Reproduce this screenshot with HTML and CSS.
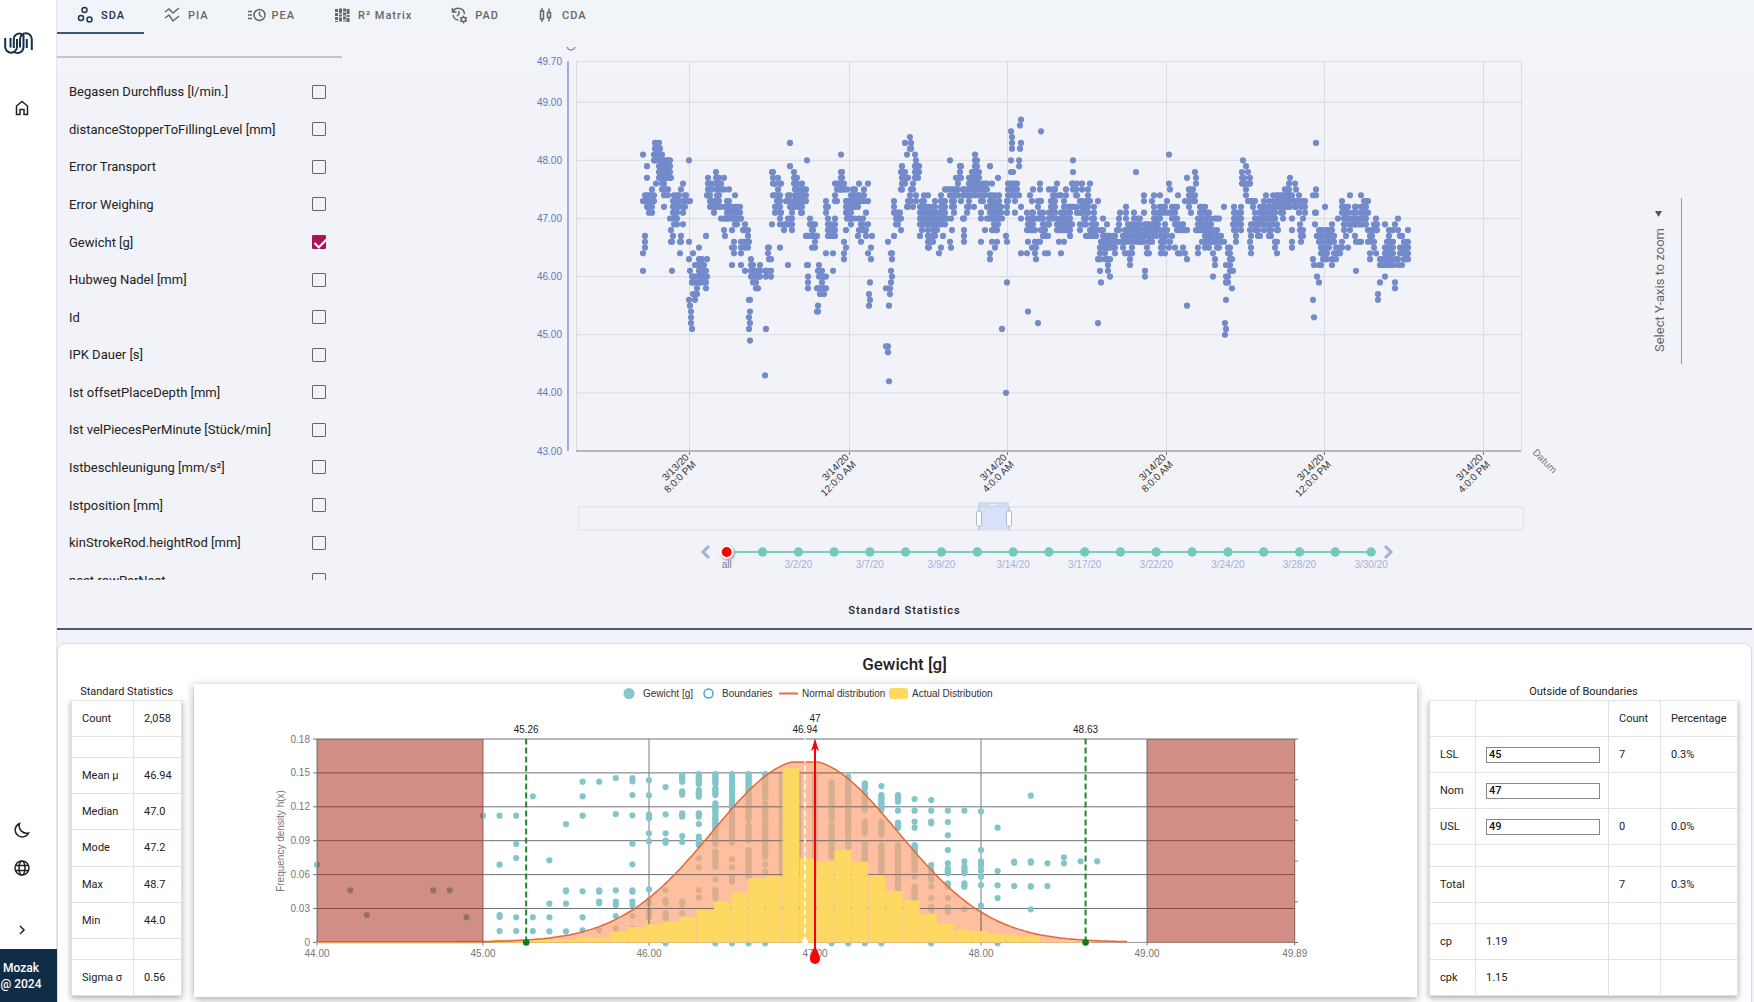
FILE: index.html
```html
<!DOCTYPE html>
<html lang="en">
<head>
<meta charset="utf-8">
<title>Standard Statistics</title>
<link rel="stylesheet" href="styles.css">
</head>
<body>
<div class="app">
  <nav class="sidebar">
    <a class="logo" href="#" aria-label="Start"><svg width="29" height="22" viewBox="0 0 29 22"><path d="M1.200 6v8.800a5.900 5.900 0 0 0 11.800 0V7M6.500 6v9.500M9.800 16V7.200a5.500 5.900 0 0 1 9.700-3.500V15a5.900 5.900 0 0 1-9.700 4.500M16 15.500V7.200a5.900 5.900 0 0 1 11.800 0V18M22.800 16V7"/></svg></a>
    <a class="nav-icon" href="#" aria-label="Home"><svg width="16" height="16" viewBox="0 0 16 16"><path d="M2.500 14.500V6L8 1.500 13.500 6v8.500H10V9.500H6v5z"/></svg></a>
    <div class="side-bottom">
      <button class="nav-icon" aria-label="Dark mode"><svg width="16" height="16" viewBox="0 0 16 16"><path d="M5.500 1.500a7 7 0 1 0 9 9.500A7.500 7.500 0 0 1 5.500 1.500z"/></svg></button>
      <button class="nav-icon" aria-label="Language"><svg width="16" height="16" viewBox="0 0 16 16"><circle cx="8" cy="8" r="7"/><ellipse cx="8" cy="8" rx="3" ry="7"/><path d="M2 5.500h12M2 10.500h12"/></svg></button>
      <button class="nav-icon expand" aria-label="Expand"><svg width="16" height="16" viewBox="0 0 16 16"><path d="M6 4l4 4-4 4"/></svg></button>
    </div>
    <div class="brand">Mozak<br>@ 2024</div>
  </nav>
  <main class="main">
    <div class="tabs" role="tablist">
      <button class="tab active" role="tab"><svg width="18" height="18" viewBox="0 0 18 18"><circle cx="7.500" cy="4" r="2.500"/><circle cx="4" cy="12" r="2.500"/><circle cx="12.500" cy="13.500" r="2.500"/></svg>SDA</button>
      <button class="tab" role="tab"><svg width="18" height="18" viewBox="0 0 18 18"><path d="M1 6l4-3 4 4 6-5M1 12l4-3 4 6 6-5"/></svg>PIA</button>
      <button class="tab" role="tab"><svg width="18" height="18" viewBox="0 0 18 18"><circle cx="11.500" cy="9" r="5.500"/><path d="M11.500 5.500V9l2.500 2M0 5.500h4M0 9h4M0 12.500h4"/></svg>PEA</button>
      <button class="tab" role="tab"><svg width="18" height="18" viewBox="0 0 18 18"><path class="thick" stroke-dasharray="3 1" d="M2.500 3v13M10.500 2.500v13"/><path class="thick" stroke-dasharray="5 1 2 1" d="M6.500 2.500v13M14 3v13"/></svg>R² Matrix</button>
      <button class="tab" role="tab"><svg width="18" height="18" viewBox="0 0 18 18"><path d="M1.500 2v4h4M2 6a6 6 0 0 1 11.500 2M2 9a6 6 0 0 0 5.500 5M8 5v3l-2 2"/><circle cx="12.500" cy="13.500" r="2.200"/><path d="M12.500 9.500v1.500M12.500 16v1.500M9 11.500l1.500 1M14.500 14.500l1.500 1M16 11.500l-1.500 1M10.500 14.500L9 15.500"/></svg>PAD</button>
      <button class="tab" role="tab"><svg width="18" height="18" viewBox="0 0 18 18"><path d="M2.500 5h3v8h-3zM4 2v3M4 13v3M9.500 6.500h3v5h-3zM11 2.500v4M11 11.500v4"/></svg>CDA</button>
    </div>

    <section class="workspace">
      <div class="params">
        <ul class="param-list">
          <li><label for="p1">Begasen Durchfluss [l/min.]</label><input type="checkbox" id="p1"></li>
          <li><label for="p2">distanceStopperToFillingLevel [mm]</label><input type="checkbox" id="p2"></li>
          <li><label for="p3">Error Transport</label><input type="checkbox" id="p3"></li>
          <li><label for="p4">Error Weighing</label><input type="checkbox" id="p4"></li>
          <li><label for="p5">Gewicht [g]</label><input type="checkbox" id="p5" checked></li>
          <li><label for="p6">Hubweg Nadel [mm]</label><input type="checkbox" id="p6"></li>
          <li><label for="p7">Id</label><input type="checkbox" id="p7"></li>
          <li><label for="p8">IPK Dauer [s]</label><input type="checkbox" id="p8"></li>
          <li><label for="p9">Ist offsetPlaceDepth [mm]</label><input type="checkbox" id="p9"></li>
          <li><label for="p10">Ist velPiecesPerMinute [Stück/min]</label><input type="checkbox" id="p10"></li>
          <li><label for="p11">Istbeschleunigung [mm/s²]</label><input type="checkbox" id="p11"></li>
          <li><label for="p12">Istposition [mm]</label><input type="checkbox" id="p12"></li>
          <li><label for="p13">kinStrokeRod.heightRod [mm]</label><input type="checkbox" id="p13"></li>
          <li><label for="p14">nest.rowPerNest</label><input type="checkbox" id="p14"></li>
        </ul>
      </div>
      <div class="scatter"><svg id="scatter" viewBox="342 47 1258 533"></svg></div>
      <div class="axis-zoom">
        <div class="axis-select">
          <select aria-label="Select Y-axis to zoom"><option>Select Y-axis to zoom</option></select>
          <svg class="caret" width="7" height="6" viewBox="0 0 7 6"><path d="M0 0h7L3.500 6z"/></svg>
        </div>
      </div>
    </section>

    <h2 class="section-title">Standard Statistics</h2>

    <section class="card">
      <h3 class="card-title">Gewicht [g]</h3>
      <div class="card-grid">
        <table class="stats">
          <caption>Standard Statistics</caption>
          <tbody>
            <tr><td>Count</td><td>2,058</td></tr>
            <tr class="gap"><td></td><td></td></tr>
            <tr><td>Mean μ</td><td>46.94</td></tr>
            <tr><td>Median</td><td>47.0</td></tr>
            <tr><td>Mode</td><td>47.2</td></tr>
            <tr><td>Max</td><td>48.7</td></tr>
            <tr><td>Min</td><td>44.0</td></tr>
            <tr class="gap"><td></td><td></td></tr>
            <tr><td>Sigma σ</td><td>0.56</td></tr>
          </tbody>
        </table>
        <div class="histogram"><svg id="histogram" viewBox="194 684 1223 313"></svg></div>
        <table class="stats bounds">
          <caption>Outside of Boundaries</caption>
          <colgroup><col class="c1"><col class="c2"><col class="c3"><col></colgroup>
          <tbody>
            <tr><td></td><td></td><td>Count</td><td>Percentage</td></tr>
            <tr><td><label for="lsl">LSL</label></td><td><input id="lsl" value="45"></td><td>7</td><td>0.3%</td></tr>
            <tr><td><label for="nom">Nom</label></td><td><input id="nom" value="47"></td><td></td><td></td></tr>
            <tr><td><label for="usl">USL</label></td><td><input id="usl" value="49"></td><td>0</td><td>0.0%</td></tr>
            <tr class="gap"><td></td><td></td><td></td><td></td></tr>
            <tr><td>Total</td><td></td><td>7</td><td>0.3%</td></tr>
            <tr class="gap"><td></td><td></td><td></td><td></td></tr>
            <tr><td>cp</td><td>1.19</td><td></td><td></td></tr>
            <tr><td>cpk</td><td>1.15</td><td></td><td></td></tr>
          </tbody>
        </table>
      </div>
    </section>
  </main>
</div>
<script src="charts.js"></script>
</body>
</html>
```
FILE: styles.css
```css
* { box-sizing: border-box; }
body { margin: 0; font-family: Roboto, sans-serif; font-size: 13px; color: #222; background: #f2f3f8; }
button { border: 0; background: none; padding: 0; margin: 0; font: inherit; color: inherit; }
svg { display: block; }

.app { display: flex; height: 100vh; overflow: hidden; }

.sidebar { flex: 0 0 57px; display: flex; flex-direction: column; background: #fff; border-right: 1px solid #e3e5ee; }
.logo { margin: 32px 0 0 4px; height: 22px; }
.logo svg { fill: none; stroke: #17304d; stroke-width: 2; }
.nav-icon { width: 16px; height: 16px; margin-left: 14px; }
.nav-icon svg { fill: none; stroke: #222; stroke-width: 1.5; }
.logo + .nav-icon { margin-top: 46px; }
.side-bottom { margin-top: auto; display: flex; flex-direction: column; gap: 22px; padding-bottom: 11px; }
.expand { margin-top: 24px; }
.brand { height: 53px; padding: 11px 15px 0 0; margin-right: -1px; background: #112c45; color: #fff; font-size: 12px; line-height: 16px; font-weight: 500; text-align: center; }

.main { flex: 1; min-width: 0; overflow: hidden; background: linear-gradient(#f0f4f8, #f2f3f8 80px); }
.tabs { display: flex; height: 34px; }
.tab { display: flex; align-items: center; gap: 6px; padding: 0 19px 2px 20px; font-size: 11px; font-weight: 500; letter-spacing: 1px; color: #666; border-bottom: 2px solid transparent; }
.tab svg { fill: none; stroke: currentColor; stroke-width: 1.5; }
.tab .thick { stroke-width: 3; }
.tab.active { color: #1b3553; border-bottom-color: #3f5872; }

.workspace { display: flex; margin-top: 13px; height: 533px; }
.params { flex: 0 0 285px; overflow: hidden; padding-top: 9px; }
.param-list { list-style: none; margin: 0; padding: 15px 16px 0 12px; height: 543px; border-top: 2px solid #c4c5ca; display: grid; grid-template-rows: repeat(14, 1fr); }
.param-list li { display: flex; align-items: center; justify-content: space-between; }
.param-list input { appearance: none; width: 14px; height: 14px; margin: 0; border: 1px solid #666; border-radius: 1px; }
.param-list input:checked { border-color: #ad1457; background: #ad1457; position: relative; }
.param-list input:checked::after { content: ""; position: absolute; left: 4px; top: 0; width: 5px; height: 10px; border: solid #fff; border-width: 0 2px 2px 0; transform: rotate(45deg); }
.scatter { flex: 1; min-width: 0; }
.scatter svg, .histogram svg { width: 100%; height: auto; }
svg text { font-family: "Liberation Sans", Arial, sans-serif; font-size: 10px; }

.axis-zoom { flex: 0 0 154px; display: flex; padding-top: 151px; }
.axis-select { width: 82px; height: 166px; border-right: 1px solid #999; display: flex; align-items: center; justify-content: center; position: relative; }
.axis-select select { flex: none; appearance: none; width: 166px; height: 30px; padding: 0 12px; border: 0; background: none; font: 13px Roboto, sans-serif; color: #666; transform: rotate(-90deg); position: relative; left: 18px; }
.caret { position: absolute; right: 19px; top: 13px; fill: #555; }

.section-title { margin: 0 2px 0 0; padding: 23px 0 9px; font-size: 11px; line-height: 16px; font-weight: 500; letter-spacing: 1px; text-align: center; border-bottom: 2px solid #4d5872; }

.card { margin: 13px 2px 0 0; height: 400px; background: #fff; border: 1px solid #d9dbe0; border-radius: 8px; padding: 0 13px; }
.card-title { margin: 0; font-size: 17px; line-height: 40px; font-weight: 500; text-align: center; }
.card-grid { display: grid; grid-template-columns: 111px minmax(0, 1fr) 309px; gap: 12px; align-items: start; }
.histogram { background: #fff; box-shadow: 0 2px 8px rgba(0, 0, 0, .35); }
.stats { width: 100%; height: 296px; border-collapse: collapse; font-size: 11px; box-shadow: 0 2px 6px rgba(0, 0, 0, .35); background: #fff; }
.stats caption { height: 16px; line-height: 16px; background: #fff; white-space: nowrap; }
.stats td { padding: 0 0 0 10px; height: 36px; border: 1px solid #e2e2e2; white-space: nowrap; }
.stats .gap td { height: 21px; }
.stats td:first-child { width: 62px; }
.bounds { table-layout: fixed; }
.bounds .c1 { width: 46px; }
.bounds .c2 { width: 133px; }
.bounds .c3 { width: 52px; }
.bounds input { display: block; width: 114px; height: 16px; padding: 0 2px; border: 1px solid #888; background: #fff; font: 500 11px Roboto, sans-serif; color: #111; }
```
FILE: charts.js
```js
const NS = 'http://www.w3.org/2000/svg';

function add(parent, name, attrs, text) {
  const el = document.createElementNS(NS, name);
  for (const key in attrs) el.setAttribute(key, attrs[key]);
  if (text !== undefined) el.textContent = text;
  parent.appendChild(el);
  return el;
}
const line = (p, x1, y1, x2, y2, stroke, width = 1, extra = {}) =>
  add(p, 'line', { x1, y1, x2, y2, stroke, 'stroke-width': width, ...extra });

// "x:a,b,c-d" groups separated by spaces; ranges step by the given amount
function parse(data, step) {
  const out = [];
  data.trim().split(/\s+/).forEach(group => {
    const [x, list] = group.split(':');
    list.split(',').forEach(item => {
      const [a, b = a] = item.split('-').map(Number);
      for (let v = a; v <= b; v += step) out.push([+x, v]);
    });
  });
  return out;
}

// Weight over time: values are tenths of a gram above 40 g
const weights = parse(`
643:81,61,73,64 645:65-67,73-74 647:77,79,72-74 649:71-74 652:71-75 654:73-74,80-81 655:80-83 656:76,81-83
659:77-83 660:77-82 662:75-81 664:72,74-80 666:75,77-80 668:74,75,77-80 670:77-80,70 671:68,66,77 672:61,66
673:67,71-73 674:69-74 677:69-74 679:72-74 680:64,66 681:66,67,75 683:76,71-73,69 685:72,74 686:73,74
689:80,66,63,56,73 690:73,61,55 691:52-54 692:51,60,59 693:64,57,59,60 695:56,57,59,60,62 697:57,58,60,62
699:65,63,61,59 700:59-63 702:60-63 704:59-62 706:58-61,67 707:60,63,74 708:77,74-76 710:72-76 712:72,73,75,76
714:71-73 716:78,76,77,72,73 717:73-77 719:72-77 721:70,72,75,76 724:77,75,68,70 725:67,70,72 727:70-73
729:75,70-73 732:62,65,68,70-72 734:64-66,70,71 735:74,69-72 737:69-72 740:70-72 741:62,64-66,70 743:66,68
745:61,69,68,65,66 748:65-68 749:56,53,51,66 750:49,52,54,56 751:60-63 753:59-62 756:58-61 758:58,60,61
760:60-62 765:43,61 766:51,60,61 768:64,65,61 769:65,63 771:63,61,60 772:69,78 773:77,78,74,76 775:71,72,74,76
777:72-74 778:77,75,73 780:76,69-74,65 781:76,71 784:68,69 786:69,73 788:62,69,70,73,74 790:83,79,72-74,69
792:68-72 794:78,72,73,76,77 795:72-77 797:73-77 799:72-75 801:71-75 802:71-76 804:73-75 806:73-75,67
807:80,67,62 808:62,58-60,67 810:70,69 812:65,67,68 813:67-69 815:69,67,65,66 817:58,54,67 818:54,55,61,58
819:60-62 820:57,58,61 822:58-61 824:57,58,60 826:64,60,58,71-73 828:67-70,72 830:67-69 833:61,64,67-69
835:67-70,73,74,76 837:75,76,73 839:75,76 841:81,75-78 842:75-78 844:63,64,66,75,76 846:65,68,71-73 847:70-73,75
849:70-73 851:69-74 853:72-75 855:72-75,70 858:67,72-74 859:76,73,74,70,68 861:66,69,68,73 863:69,70,68,74
864:73-75,68 866:71,67,68 868:76,73,69,64 869:55,57 870:56,59 871:63,65 872:67 886:58,48 888:66,47,48 889:42,55
890:57,58 891:59,61,64 892:64,63,60 894:67,71-73 896:69-71 898:69-71 900:70,71 901:68,75,78,70 902:75-79
905:83,76-78 907:81,72,77 908:72,73,77 910:84,82,74 911:82,83,73,75 913:72,75,76 915:81,77-79 916:77-80,74,73
918:77-79 919:78,79 920:67,69-72 922:68-73 924:69-74 927:69-72 928:74,65-68 929:65,67,70-72 931:66,69-71
933:66-72 935:67-73 937:68-71 939:64,69-71 941:74,65,69-73 943:70-73,67 945:69-73,75 947:70,75 950:80,75,66,74
951:65,70 952:68,72,73,75 954:71-75 956:74,75,77 958:74-77 960:79,78 961:79,77,73 963:74,75,70 964:66-68,70,74,75
967:71,72,74,75 969:72-77 972:74-78 974:72,75-78 975:81,74-80 977:75-80 979:74-78 981:66,70,71,73,75 983:73-76
985:68,74-76 987:75,76,72,70 990:79,70-74,63,64 992:66,68,70-74,76 994:68-70 995:65,71-74 997:66,68-72 998:77,69
999:70-74 1001:71,72 1002:51,70 1006:40,67 1007:59,66,71-73 1008:73-76 1011:78,80,85,74-76 1012:82-84,76
1013:78,74,75 1015:71,73-76 1017:74-76 1019:80,79,74 1020:82,86 1021:87,83,70,72,64 1027:71,68,64 1028:54,66,70,69
1030:74,68-70 1032:68-71,65,73 1033:75,71,69 1035:64-66,68,70 1036:63,65 1038:70,72,73,52,66 1040:76,75,71,70,66,73
1041:85,68,73 1043:67-71 1045:67-69,64 1048:64,67,69 1049:75,69-71 1051:70-73 1053:70-75 1055:71-75 1057:76,68-70
1059:66,68,69,74 1061:64,68-71,74 1063:68-71 1064:66,68-73 1066:74,75,68-70 1068:68-72 1070:67-72 1072:76,69,72
1073:80,78,75,76,72 1076:75,74,72 1077:71,72,76,74 1080:68,69,71,73 1082:75,76,71-73 1084:69,70,72 1086:67,69-73
1088:67,71-75 1090:76,73,67,68 1092:67-70 1094:67-72 1096:67-69 1098:73,52,63 1100:61,63-65,68 1101:59,66,65
1103:70,65-68 1105:63-67 1107:69,63,65-67 1108:61,62,65-67 1110:60,63,65-67 1113:65-67 1115:64-67 1117:66,68
1119:68-70 1120:71,66 1123:65-67 1125:64,66-68 1126:72,70,71,66 1128:64,67-69 1130:62-64,66,68 1132:64,65,67-69
1134:66-71 1136:78,68 1138:66-70 1140:66-70 1142:66-68 1144:74,71,73,66 1145:60,61,67-69 1147:64,65,67-69
1149:64,66-69 1152:66-69,73 1154:74,68-72 1156:67-70 1158:68-71 1160:74,70-72 1161:64-68 1163:65-67,71,72
1165:64,66-69,72 1167:68,67,71,73 1169:81,76,65 1170:75,66,71 1172:67,70-72 1175:65,69-72 1177:72,70,68,69
1178:74,64 1180:64,68,69 1183:65,68,69 1185:64,68,73 1187:77,63,55,68 1189:72-75 1191:71,74,75 1193:73-75
1195:78,74,73 1196:76,77,68 1198:64,65,68-70 1200:68-72 1202:66,68-72 1205:65-72 1207:66-71 1209:65-71 1211:66-70
1213:60,64,66-68 1215:62,63,66,70 1217:65-68,70 1219:65,67,70 1221:66,67 1224:72,66 1225:50,52 1226:51,56,59,60,62
1228:60,59,64,65 1230:61-65 1232:58,63,61 1233:61,69 1234:68-72 1236:66-71 1239:69-71 1241:68-72 1242:76-78
1243:80,77 1244:76,77 1246:79,74-76 1248:73,76,78 1250:76,77,73,66,68 1251:64,65,67,69,73 1253:69,72,73
1255:68-71,73 1258:67-70 1260:67,69-72 1262:69-72 1264:70-73,68 1266:74,69-72 1269:67-73 1271:67-72 1273:69-74
1275:65,66,70-72 1277:64,66,68,69,73,74 1278:68,72-74 1281:71-74 1283:70-74 1285:72-75 1287:72-75 1289:73-76
1290:77,74,72 1292:65,66,68,70,73,74 1295:76,73,72 1296:75,72,73 1299:74,71,73 1300:69,68 1301:66,67,72
1303:67,70,68,73 1305:71-73 1313:74,56,63 1314:53,62 1315:69,71 1316:83,75,74,71 1317:60,67 1319:59,62,66,68
1321:62,64-68 1323:63-68 1325:72,64,63 1327:63-68 1329:65-68 1332:69,62,63,66-68 1334:66,67,64 1336:63,65
1338:64,65,70 1340:64,65 1342:73,71,72,66,65 1344:68-72 1346:67,69-72 1348:70-72,65 1350:74,68-70 1353:69-71
1355:67,72,69,70 1356:61,66,69-72 1359:66,69,70 1361:74,69-72,66 1364:69-73 1366:69-73 1368:73,71,68,66
1370:63,64,67 1372:66-68 1374:66,69,68,65 1376:70,68,64 1377:68,69 1378:57,56 1380:59,62,63 1382:62,63
1385:60,69,62-65 1387:62-64,66 1389:62-68 1391:62-66 1393:62,64-66,68 1395:58,59,69,63 1398:70,68,62,63
1400:64,65,67 1402:62,67,65 1404:63-66 1406:63-66 1408:68,63-66`, 1);

function drawScatter(svg) {
  const y = v => 451 - (v - 43) * 58.13;
  const blue = '#5e76c4';
  const grid = '#dadce1';
  [49.7, 49, 48, 47, 46, 45, 44].forEach(v => line(svg, 576, y(v), 1521.5, y(v), grid));
  [576.5, 1521.5].forEach(x => line(svg, x, y(49.7), x, 451, grid));
  const ticks = [[689.5, '3/13/20', '8:0:0 PM'], [849.5, '3/14/20', '12:0:0 AM'], [1007.5, '3/14/20', '4:0:0 AM'],
    [1166.5, '3/14/20', '8:0:0 AM'], [1324.5, '3/14/20', '12:0:0 PM'], [1483.5, '3/14/20', '4:0:0 PM']];
  ticks.forEach(([x, date, time]) => {
    line(svg, x, y(49.7), x, 451, grid);
    line(svg, x, 451, x, 455, '#777');
    const g = add(svg, 'g', { transform: `translate(${x} 458) rotate(-45)`, 'text-anchor': 'end', fill: '#333' });
    add(g, 'text', { x: 0, y: 0 }, date);
    add(g, 'text', { x: 0, y: 10 }, time);
  });
  line(svg, 576, 451, 1521, 451, '#b4b6ba', 2);
  line(svg, 568, y(49.7), 568, 451, '#8195d4', 1.5);
  [49.7, 49, 48, 47, 46, 45, 44, 43].forEach(v =>
    add(svg, 'text', { x: 562, y: y(v) + 3.5, 'text-anchor': 'end', fill: blue }, v.toFixed(2)));
  add(svg, 'circle', { cx: 571, cy: 46, r: 4, fill: 'none', stroke: '#7d90d2', 'stroke-width': 1.5 });
  add(svg, 'text', { transform: 'translate(1532 453) rotate(45)', fill: '#777' }, 'Datum');
  weights.forEach(([x, v]) => add(svg, 'circle', { cx: x, cy: y(40 + v / 10), r: 3.1, fill: '#738acb' }));

  // range slider
  add(svg, 'rect', { x: 578.5, y: 507, width: 945, height: 23, rx: 2, fill: 'none', stroke: '#e1e5f0', 'stroke-width': 1.5 });
  add(svg, 'rect', { x: 978, y: 502, width: 31, height: 6, rx: 1, fill: '#d2daf0' });
  add(svg, 'rect', { x: 979, y: 508, width: 30, height: 22, fill: '#d8e1f7' });
  [979, 1009].forEach(x => {
    line(svg, x, 507, x, 530, '#acb8d1');
    add(svg, 'rect', { x: x - 2.5, y: 511, width: 5, height: 15, rx: 1.5, fill: '#fff', stroke: '#acb8d1' });
  });
  [991, 993.5, 996].forEach(x => add(svg, 'circle', { cx: x, cy: 504.5, r: 0.8, fill: '#fff' }));

  // day timeline
  const labels = { 0: 'all', 2: '3/2/20', 4: '3/7/20', 6: '3/9/20', 8: '3/14/20', 10: '3/17/20', 12: '3/22/20', 14: '3/24/20', 16: '3/28/20', 18: '3/30/20' };
  line(svg, 727, 552, 1371, 552, '#7dcdbf', 2);
  for (let i = 0; i <= 18; i++) {
    const x = 726.7 + i * 35.8;
    if (i) add(svg, 'circle', { cx: x, cy: 552, r: 4.7, fill: '#73c9bb' });
    else add(svg, 'circle', { cx: x, cy: 552, r: 6, fill: '#f00', stroke: '#fff', 'stroke-width': 2, style: 'filter:drop-shadow(1px 1px 1px #888)' });
    if (labels[i]) add(svg, 'text', { x, y: 568, 'text-anchor': 'middle', fill: i ? '#a3b1d8' : '#707891' }, labels[i]);
  }
  const chevron = { fill: 'none', stroke: '#a3b1d8', 'stroke-width': 3 };
  add(svg, 'path', { d: 'M709 546l-6 6 6 6', ...chevron });
  add(svg, 'path', { d: 'M1385 546l6 6-6 6', ...chevron });
}

// Measurement cloud: tenths of a gram above 44 g against vertical position
const cloud = parse(`
0:584 2:661 3:735 7:661 8:661 9:742 10:437 11:437,584,735,741,783 12:437,522,564,742,783 13:379,742,783
14:571,701,742,784 15:462,661,664,701,784 16:335,379,437,664,742,781 17:335,661,665,695,700,781
18:324,432,661,695,705,738,776 19:324,334,375,436,521,583,661,665,695,705,738,775
20:331,376,434,440,445,490,514,658,690-704,722-744 21:351,433,490,512,518,660,690-700,730-748,820
22:315-335,364-378,430-442,498,516,695-708,730 23:312-342,360-380,430-442,462,500,510-525,565,592,660,683
24:312-345,355-375,400-432,438-524,545-592,628,660-685,820 25:312-372,380-400,408-450,458-520,568,592,620-635,820
26:312-372,378-450,466-515,540-620,820 27:312-385,400-450,460-560,583,605,820 28:312-450,458-610 29:320-400,410-600
30:320-480,490-600 31:337-450,465-560,820 32:320-490,502,516-532,820 33:340-358,370-424,455-492,520-590,820
34:348,375-420,455-495,525-605,820 35:375-395,422,458-474,525-660 36:387,422,455,473,525-600,620,650-690
37:390,422,455,460,585,600-630,650,684,710-720,820 38:422,456,496,540,580,595-612,640-650,684,712-728
39:422,574,590-612,640-654,718 40:424,540,574-590,602,620,645,707 41:473,603,646,684,820 42:575,578,648
43:377,574,578,648,650,718 44:580,648 45:562,580 46:574 47:574`, 5);

const barTops = [809, 808, 810, 810, 808, 801, 801, 785, 771, 763, 755, 741, 719, 695, 668, 625, 619, 294, 565, 574,
  541, 575, 616, 663, 691, 733, 762, 780, 783, 792, 797, 799, 814, 814, 814];

function drawHistogram(svg) {
  const x = v => 317 + (v - 44) * 166;
  const top = 739, base = 942.5;
  const row = n => 670 + n / 3;

  // legend
  const text = (tx, ty, s, attrs = {}) => add(svg, 'text', { x: tx, y: ty, fill: '#333', ...attrs }, s);
  add(svg, 'circle', { cx: 629, cy: 693.5, r: 5.5, fill: '#85c7cb' });
  text(643, 697, 'Gewicht [g]');
  add(svg, 'circle', { cx: 708.5, cy: 693.5, r: 4.5, fill: 'none', stroke: '#4aa5dc', 'stroke-width': 1.5 });
  text(722, 697, 'Boundaries');
  line(svg, 779, 693.5, 798, 693.5, '#e2703f', 2);
  text(802, 697, 'Normal distribution');
  add(svg, 'rect', { x: 889, y: 688, width: 19, height: 11, rx: 3, fill: '#fdd962' });
  text(912, 697, 'Actual Distribution');

  // grid
  for (let i = 0; i <= 6; i++) {
    const gy = top + i * 33.9;
    line(svg, 317, gy, 1295, gy, i === 6 ? '#999' : '#6f7178', 1);
    line(svg, 313, gy, 317, gy, '#777');
    text(310, gy + 3.5, i === 6 ? '0' : (0.18 - i * 0.03).toFixed(2), { 'text-anchor': 'end', fill: '#777' });
  }
  for (let i = 0; i <= 5; i++) line(svg, 1295, top + i * 40.7, 1298, top + i * 40.7, '#777');
  [44, 45, 46, 47, 48, 49, 49.89].forEach(v => {
    line(svg, x(v), top, x(v), base + 3, '#777a82');
    text(x(v), 957, v.toFixed(2), { 'text-anchor': 'middle', fill: '#777' });
  });
  add(svg, 'text', { transform: 'translate(284 841) rotate(-90)', 'text-anchor': 'middle', fill: '#777' }, 'Frequency density h(x)');

  cloud.forEach(([v, n]) => add(svg, 'circle', { cx: x(44 + v / 10), cy: row(n), r: 3.1, fill: '#83c5ca' }));

  // normal distribution
  const curve = v => {
    const z = (v - 46.94) / 0.558;
    return Math.max(762, 942 - 182 * Math.exp(-z * z / 2));
  };
  let d = '';
  for (let v = 44; v <= 48.89; v += 0.02) d += `${d ? 'L' : 'M'}${x(v).toFixed(1)} ${curve(v).toFixed(1)}`;
  add(svg, 'path', { d: `${d}V${base}H317z`, fill: '#fca476', 'fill-opacity': 0.7 });

  // grid lines stay visible through the shaded area
  for (let i = 1; i <= 5; i++) {
    const gy = top + i * 33.9;
    const half = 0.558 * Math.sqrt(2 * Math.log(182 / (942 - gy)));
    line(svg, x(46.94 - half), gy, x(46.94 + half), gy, '#5f5a5c', 1, { 'stroke-opacity': 0.7 });
  }
  [46, 48].forEach(v => line(svg, x(v), curve(v), x(v), base, '#5f5a5c', 1, { 'stroke-opacity': 0.7 }));

  barTops.forEach((n, i) => add(svg, 'rect', { x: 490.3 + i * 17.2, y: row(n), width: 16.6, height: base - row(n), fill: '#fdd962' }));
  add(svg, 'path', { d, fill: 'none', stroke: '#e0683a', 'stroke-width': 1.5 });

  // outside of the limits
  [[44, 45], [49, 49.89]].forEach(([a, b]) =>
    add(svg, 'rect', { x: x(a), y: top, width: x(b) - x(a), height: base - top, fill: '#a31d09', 'fill-opacity': 0.5 }));
  line(svg, 317, base, 482, base, '#e79a55', 1.5);

  // markers
  [45.26, 48.63].forEach(v => {
    line(svg, x(v), base, x(v), top, '#1a8a2a', 2, { 'stroke-dasharray': '6 3' });
    add(svg, 'circle', { cx: x(v), cy: base, r: 3.3, fill: '#0c7d16' });
    text(x(v), 733, v.toFixed(2), { 'text-anchor': 'middle', fill: '#222' });
  });
  text(805, 733, '46.94', { 'text-anchor': 'middle', fill: '#222' });
  text(815, 722, '47', { 'text-anchor': 'middle', fill: '#222' });
  line(svg, 805, base, 805, top - 2, '#fff', 1.5, { 'stroke-dasharray': '6 3' });
  add(svg, 'circle', { cx: 805, cy: base - 1, r: 3, fill: '#fff' });
  line(svg, 815, 958, 815, 748, '#f00', 2);
  add(svg, 'path', { d: 'M815 739l4 12-4-3-4 3z', fill: '#f00' });
  add(svg, 'path', { d: 'M815 944c1 6 5 10 5 15a5 5 0 0 1-10 0c0-5 4-9 5-15z', fill: '#f00' });
}

drawScatter(document.getElementById('scatter'));
drawHistogram(document.getElementById('histogram'));
```
